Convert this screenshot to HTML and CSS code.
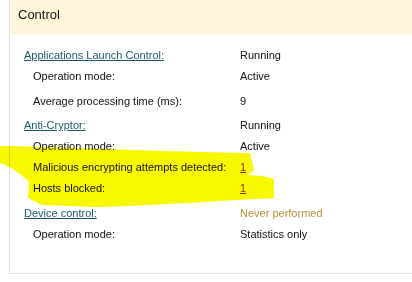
FILE: index.html
```html
<!DOCTYPE html>
<html lang="en">
<head>
	<meta charset="UTF-8">
	<title>Control</title>
	<link rel="stylesheet" href="styles.css">
</head>
<body>
<div class="panel">
	<header class="head">Control</header>
	<!-- 组件状态 -->
	<ul class="list">
		<li class="row group"><a href="#" class="name">Applications Launch Control:</a><span class="val">Running</span></li>
		<li class="row"><span class="name">Operation mode:</span><span class="val">Active</span></li>
		<li class="row gap"><span class="name">Average processing time (ms):</span><span class="val">9</span></li>
		<li class="row group next"><a href="#" class="name">Anti-Cryptor:</a><span class="val">Running</span></li>
		<li class="row"><span class="name">Operation mode:</span><span class="val">Active</span></li>
		<li class="row"><span class="name">Malicious encrypting attempts detected:</span><a href="#" class="val count">1</a></li>
		<li class="row"><span class="name">Hosts blocked:</span><a href="#" class="val count">1</a></li>
		<li class="row group last"><a href="#" class="name">Device control:</a><span class="val never">Never performed</span></li>
		<li class="row"><span class="name">Operation mode:</span><span class="val">Statistics only</span></li>
	</ul>
	<!-- 黄色标记 -->
	<svg class="mark" width="412" height="282" viewBox="0 0 412 282">
		<path d="M0 146 C40 146 120 150 200 152 L250 153 L254 170 L248 175 L262 176 L274 179 L274 198 C230 200 150 206 95 207 L42 205 L28 198 L29 182 C20 172 8 166 0 163 Z" fill="#f8f800"/>
	</svg>
</div>
</body>
</html>
```

FILE: styles.css
```css
body,
ul {
	margin: 0;
	padding: 0;
}

ul {
	list-style: none;
}

body {
	background: #fff;
	font-family: "Liberation Sans", Arial, sans-serif;
}

.panel {
	position: relative;
	margin-left: 9px;
	padding-left: 1px;
	height: 273px;
	border-left: 1px solid #dcdcdc;
	border-bottom: 1px solid #e2e2e2;
}

.head {
	height: 34px;
	padding-left: 7px;
	background: #fff5d8;
	font-size: 13px;
	line-height: 29px;
	color: #111;
}

.list {
	padding-top: 11px;
}

.row {
	display: flex;
	height: 21px;
	line-height: 21px;
	font-size: 11px;
	color: #111;
}

.row .name {
	width: 207px;
	padding-left: 22px;
}

.row.group .name {
	padding-left: 13px;
	width: 216px;
}

.gap {
	margin-top: 4px;
}

.next {
	margin-top: 3px;
}

.last {
	margin-top: 4px;
}

a {
	color: #1d5a66;
	text-decoration: underline;
}

.val {
	color: #111;
}

.count {
	color: #8c3c0c;
}

.never {
	color: #b5903a;
}

/* 标记放在文字下面，用正片叠底 */
.mark {
	position: absolute;
	left: -10px;
	top: 0;
	mix-blend-mode: multiply;
	pointer-events: none;
}
```
